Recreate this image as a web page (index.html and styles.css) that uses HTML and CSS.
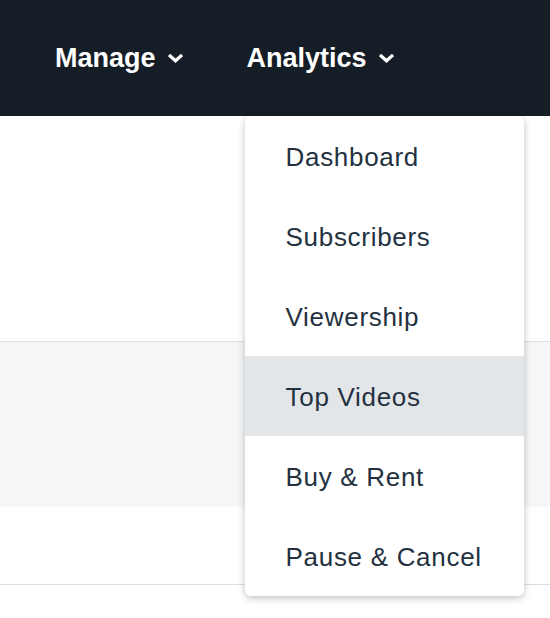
FILE: index.html
```html
<!DOCTYPE html>
<html lang="en">
<head>
<meta charset="utf-8">
<title>Analytics menu</title>
<link rel="stylesheet" href="styles.css">
</head>
<body>
<header class="topbar">
  <nav class="nav">
    <div class="nav-item">
      <span class="nav-label">Manage</span>
      <svg class="chev" viewBox="0 0 15 9" width="15" height="9" aria-hidden="true"><path d="M2.2 2 L7.5 6.8 L12.8 2" /></svg>
    </div>
    <div class="nav-item nav-item--open">
      <span class="nav-label">Analytics</span>
      <svg class="chev" viewBox="0 0 15 9" width="15" height="9" aria-hidden="true"><path d="M2.2 2 L7.5 6.8 L12.8 2" /></svg>
      <ul class="dropdown">
        <li class="dropdown-item">Dashboard</li>
        <li class="dropdown-item">Subscribers</li>
        <li class="dropdown-item">Viewership</li>
        <li class="dropdown-item dropdown-item--active">Top Videos</li>
        <li class="dropdown-item">Buy &amp; Rent</li>
        <li class="dropdown-item">Pause &amp; Cancel</li>
      </ul>
    </div>
  </nav>
</header>
<main class="content">
  <div class="row row--top"></div>
  <div class="row row--shaded"></div>
  <div class="row row--bottom"></div>
</main>
</body>
</html>
```

FILE: styles.css
```css
* { box-sizing: border-box; }
html, body {
  margin: 0;
  padding: 0;
  background: #ffffff;
  font-family: "Liberation Sans", Arial, Helvetica, sans-serif;
}
body {
  min-height: 618px;
}
.topbar {
  height: 116px;
  background: #151d26;
  padding-left: 55px;
}
.nav {
  display: flex;
  height: 100%;
  gap: 64px;
}
.nav-item {
  position: relative;
  display: flex;
  align-items: center;
  gap: 12px;
  color: #ffffff;
  height: 100%;
}
.nav-label {
  font-size: 27px;
  font-weight: 700;
  line-height: 1;
  padding-top: 1px;
}
.chev {
  display: block;
  margin-top: 1px;
}
.chev path {
  fill: none;
  stroke: #ffffff;
  stroke-width: 3.2;
  stroke-linecap: square;
}
.dropdown {
  position: absolute;
  top: 100%;
  left: -2px;
  width: 279px;
  margin: 0;
  padding: 0;
  list-style: none;
  background: #ffffff;
  border-radius: 6px;
  box-shadow: 0 2px 7px rgba(20, 30, 40, 0.28);
  overflow: hidden;
  z-index: 10;
}
.dropdown-item {
  height: 80px;
  display: flex;
  align-items: center;
  padding-left: 41px;
  padding-top: 3px;
  font-size: 26px;
  letter-spacing: 0.7px;
  color: #243140;
  white-space: nowrap;
}
.dropdown-item--active {
  background: #e3e6e8;
}
.content {
  display: flex;
  flex-direction: column;
}
.row--top {
  height: 226px;
  border-bottom: 1px solid #dde0e3;
}
.row--shaded {
  height: 165px;
  background: #f5f6f7;
}
.row--bottom {
  height: 78px;
  border-bottom: 1px solid #dde0e3;
}
```
